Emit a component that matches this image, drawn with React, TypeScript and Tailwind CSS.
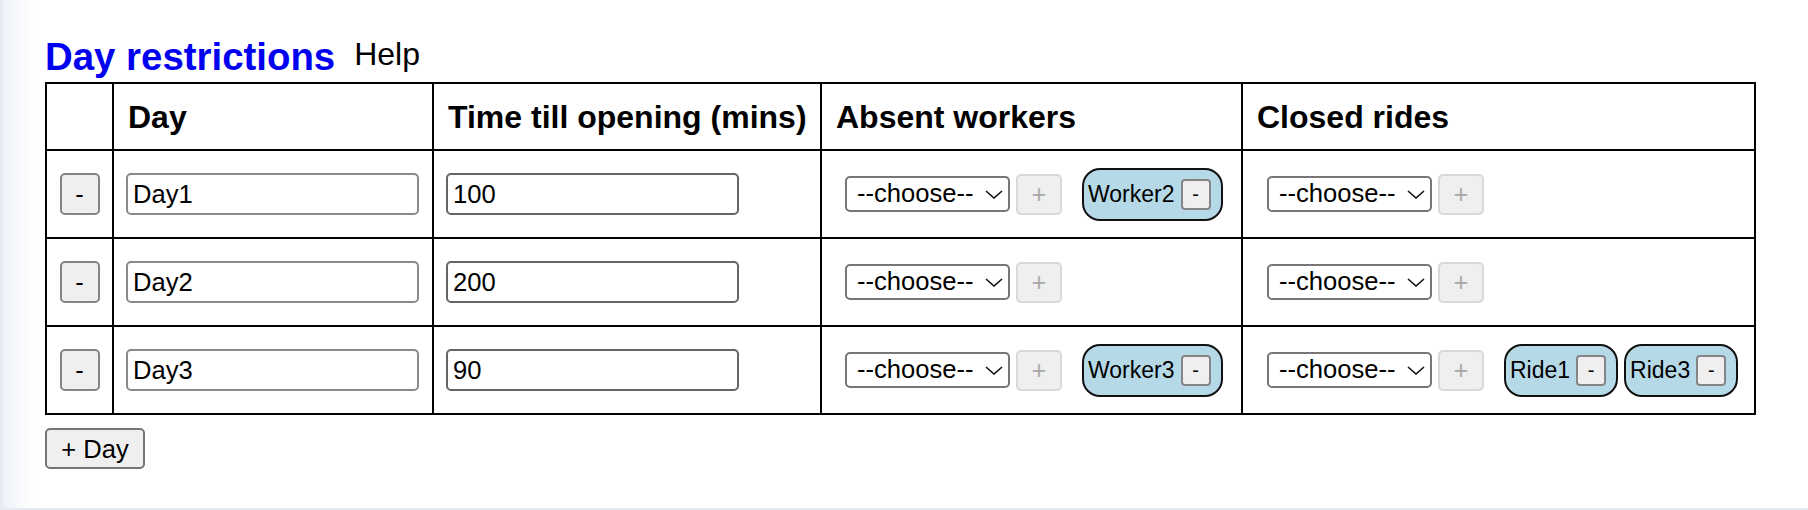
import { FC } from "react";

type Day = {
  name: string;
  mins: string;
  workers: string[];
  rides: string[];
};

const days: Day[] = [
  { name: "Day1", mins: "100", workers: ["Worker2"], rides: [] },
  { name: "Day2", mins: "200", workers: [], rides: [] },
  { name: "Day3", mins: "90", workers: ["Worker3"], rides: ["Ride1", "Ride3"] },
];

const font = "font-['Liberation_Sans',Arial,sans-serif]";

const Chip: FC<{ label: string }> = ({ label }) => (
  <span className="inline-flex h-[53px] items-center gap-[6px] rounded-[18px] border-2 border-[#111] bg-[#b5d9e6] pl-[4px] pr-[10px] text-[23px] text-black">
    {label}
    <button className="flex h-[31px] w-[30px] items-center justify-center rounded-[4px] border-2 border-[#858585] bg-[#efefef] text-[20px] leading-none">
      -
    </button>
  </span>
);

const Picker: FC<{ items: string[] }> = ({ items }) => (
  <div className="flex items-center">
    <div className="relative">
      <select className="h-[36px] w-[165px] appearance-none rounded-[5px] border-2 border-[#767676] bg-white pl-[10px] text-[25.6px] leading-none text-black">
        <option>--choose--</option>
      </select>
      <svg
        className="pointer-events-none absolute right-[7px] top-[14px]"
        width="18"
        height="9"
        viewBox="0 0 18 9"
        fill="none"
      >
        <path d="M1 1l8 7 8-7" stroke="#111" strokeWidth="1.6" />
      </svg>
    </div>
    <button
      disabled
      className="ml-[6px] flex h-[41px] w-[46px] items-center justify-center rounded-[5px] border-2 border-[#d8d8d8] bg-[#efefef] text-[25.6px] text-[#a8a8a8]"
    >
      +
    </button>
    {items.length > 0 && (
      <div className="ml-[20px] flex items-center gap-[6px]">
        {items.map((it) => (
          <Chip key={it} label={it} />
        ))}
      </div>
    )}
  </div>
);

const App: FC = () => {
  return (
    <div className={`flex h-[510px] bg-[#e6ebf2] pb-[2px] pl-[3px] ${font}`}>
      <div className="flex flex-1 bg-white">
        <div className="w-[30px] bg-linear-to-r from-[#eef2f7] to-white" />
        <div className="flex flex-col pl-[12px] pt-[35px]">
          <div className="flex items-end gap-[19px]">
            <h2 className="text-[38.4px] font-bold leading-[44px] text-[#0000f0]">
              Day restrictions
            </h2>
            <span className="mb-[6px] text-[32px] leading-[37px] text-black">Help</span>
          </div>
          <table className="mt-[3px] w-[1709px] table-fixed border-collapse text-black">
            <thead>
              <tr>
                <th className="h-[67px] w-[67px] border-2 border-black" />
                <th className="w-[320px] whitespace-nowrap border-2 border-black pl-[14px] pr-[2px] text-left text-[32px] font-bold">
                  Day
                </th>
                <th className="w-[388px] whitespace-nowrap border-2 border-black pl-[14px] pr-[2px] text-left text-[32px] font-bold">
                  Time till opening (mins)
                </th>
                <th className="w-[421px] whitespace-nowrap border-2 border-black pl-[14px] pr-[2px] text-left text-[32px] font-bold">
                  Absent workers
                </th>
                <th className="w-[513px] whitespace-nowrap border-2 border-black pl-[14px] pr-[2px] text-left text-[32px] font-bold">
                  Closed rides
                </th>
              </tr>
            </thead>
            <tbody>
              {days.map((d) => (
                <tr key={d.name}>
                  <td className="h-[88px] border-2 border-black">
                    <button className="mx-auto flex h-[42px] w-[40px] items-center justify-center rounded-[5px] border-2 border-[#858585] bg-[#efefef] text-[25.6px]">
                      -
                    </button>
                  </td>
                  <td className="border-2 border-black pl-[12px]">
                    <input
                      defaultValue={d.name}
                      className="h-[42px] w-[293px] rounded-[5px] border-2 border-[#8a8a8a] pl-[5px] text-[25.6px]"
                    />
                  </td>
                  <td className="border-2 border-black pl-[12px]">
                    <input
                      defaultValue={d.mins}
                      className="h-[42px] w-[293px] rounded-[5px] border-2 border-[#666] pl-[5px] text-[25.6px]"
                    />
                  </td>
                  <td className="border-2 border-black pl-[23px]">
                    <Picker items={d.workers} />
                  </td>
                  <td className="border-2 border-black pl-[24px]">
                    <Picker items={d.rides} />
                  </td>
                </tr>
              ))}
            </tbody>
          </table>
          <div className="mt-[13px]">
            <button className="h-[41px] w-[100px] rounded-[5px] border-2 border-[#767676] bg-[#efefef] text-[25.6px]">
              + Day
            </button>
          </div>
        </div>
      </div>
    </div>
  );
};

export default App;
